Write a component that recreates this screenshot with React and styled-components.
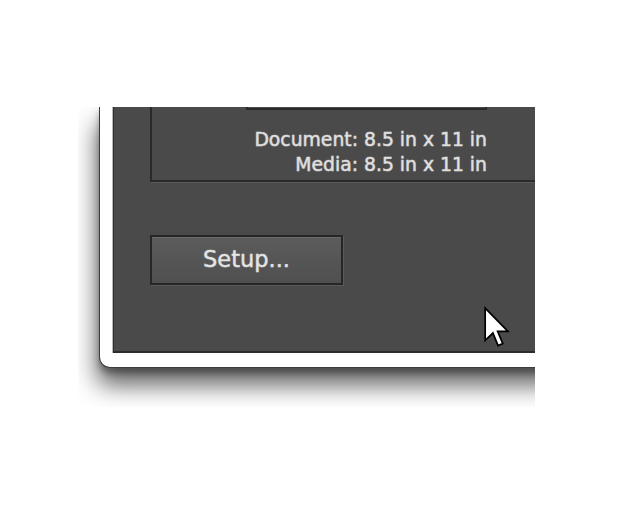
import React from "react";
import styled, { createGlobalStyle } from "styled-components";

const Global = createGlobalStyle`
  html, body { margin: 0; padding: 0; background: #ffffff; }
  body { font-family: "DejaVu Sans", Verdana, sans-serif; }
`;

const Stage = styled.div`
  width: 620px;
  height: 517px;
  padding: 107px 0 0 78px;
  box-sizing: border-box;
`;

const Clip = styled.div`
  width: 457px;
  height: 300px;
  overflow: hidden;
  padding-left: 21px;
  box-sizing: border-box;
`;

const Window = styled.div`
  width: 500px;
  background: #ffffff;
  border: 1px solid #3c3c3c;
  border-top: none;
  border-bottom-left-radius: 11px;
  padding: 0 0 14px 13px;
  box-shadow: -2px 17px 24px rgba(0, 0, 0, 0.62), 0 5px 6px rgba(0, 0, 0, 0.3);
`;

const Panel = styled.div`
  position: relative;
  height: 244px;
  background: #4a4a4a;
  border-left: 1px solid #2f2f2f;
  border-bottom: 2px solid #2c2c2c;
  box-shadow: -1px 0 0 #b8b8b8;
  display: flex;
  flex-direction: column;
  align-items: flex-start;
`;

const Group = styled.div`
  margin-left: 36px;
  width: 420px;
  height: 73px;
  border: 2px solid #2a2a2a;
  border-top: none;
  box-shadow: 1px 1px 0 #595959;
`;

const Preview = styled.div`
  margin-left: 94px;
  width: 237px;
  height: 1px;
  border: 2px solid #2a2a2a;
  border-top: none;
`;

const Info = styled.div`
  margin: 17px 0 0 94px;
  width: 241px;
  text-align: right;
  font-size: 18.8px;
  line-height: 25px;
  color: #e2e2e2;
  white-space: nowrap;
  -webkit-text-stroke: 0.45px #d8d8d8;
  text-shadow: 0 0 1.5px rgba(255, 255, 255, 0.3);
`;

const Button = styled.button`
  margin: 53px 0 0 36px;
  width: 193px;
  height: 50px;
  border: 2px solid #262626;
  background: linear-gradient(#5c5c5c, #545454 60%, #505050);
  box-shadow: inset 0 1px 0 #6a6a6a, 1px 1px 0 #5a5a5a;
  color: #e6e6e6;
  font-family: "DejaVu Sans", Verdana, sans-serif;
  font-size: 22.5px;
  padding: 0 0 2px 0;
  -webkit-text-stroke: 0.4px #dcdcdc;
  text-shadow: 0 0 1.5px rgba(255, 255, 255, 0.3);
`;

const Cursor = styled.svg`
  position: absolute;
  left: 369px;
  top: 199px;
`;

export default function App() {
  return (
    <>
      <Global />
      <Stage>
        <Clip>
          <Window>
            <Panel>
              <Group>
                <Preview />
                <Info>
                  <div>Document: 8.5 in x 11 in</div>
                  <div>Media: 8.5 in x 11 in</div>
                </Info>
              </Group>
              <Button>Setup...</Button>
              <Cursor width="28" height="43" viewBox="0 0 13 20">
                <path
                  d="M1 1 L1 16 L4.6 12.6 L7 18.4 L9.2 17.5 L6.8 11.8 L11.6 11.8 Z"
                  fill="#ffffff"
                  stroke="#000000"
                  strokeWidth="0.8"
                  strokeLinejoin="miter"
                />
              </Cursor>
            </Panel>
          </Window>
        </Clip>
      </Stage>
    </>
  );
}
